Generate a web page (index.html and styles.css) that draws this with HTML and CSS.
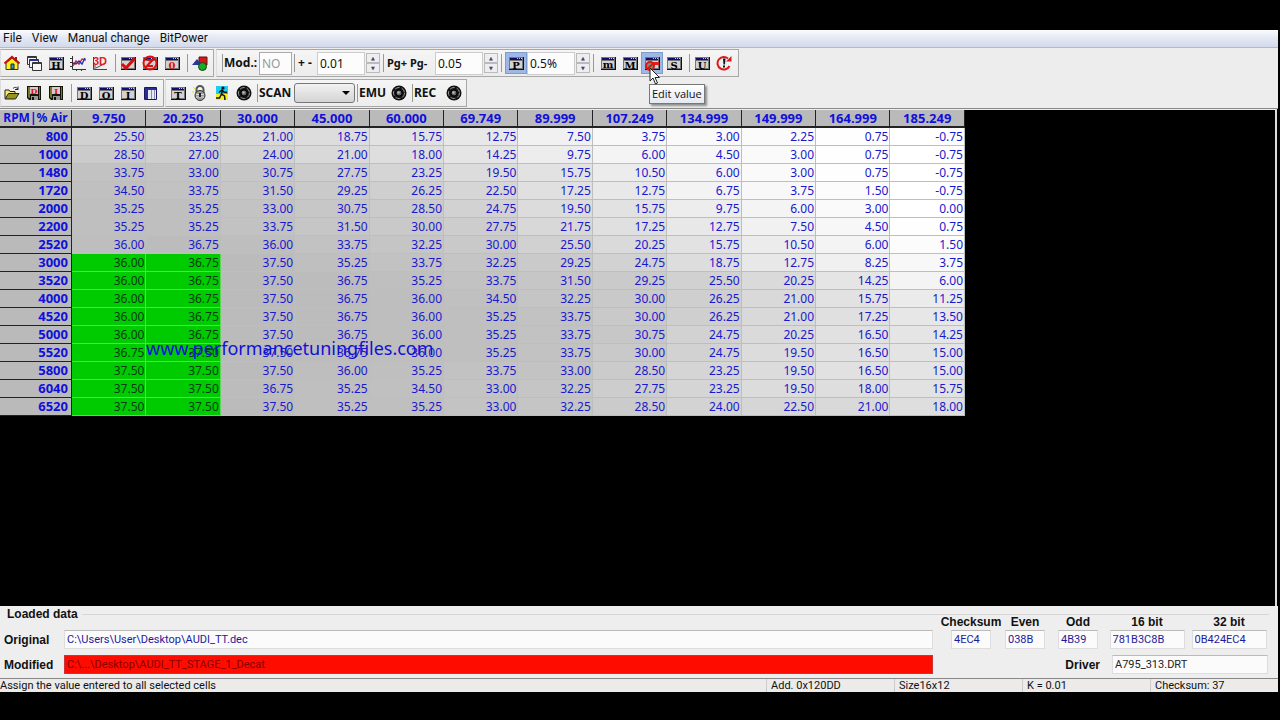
FILE: index.html
```html
<!DOCTYPE html>
<html lang="en">
<head>
<meta charset="utf-8">
<title>BitPower</title>
<link rel="stylesheet" href="styles.css">
</head>
<body>
<svg class="defs" aria-hidden="true">
  <symbol id="win" viewBox="0 0 16 16">
    <rect x="1" y="2" width="15" height="13" fill="#111"/>
    <rect x="1" y="2" width="14" height="12" fill="#777"/>
    <rect x="2" y="6" width="12" height="7" fill="#d2d2d2"/>
    <rect x="2" y="3" width="12" height="2" fill="#10106c"/>
    <path d="M9 3.500h1M11 3.500h1M13 3.500h1" stroke="#ccc"/>
  </symbol>
  <symbol id="floppy" viewBox="0 0 16 16">
    <path d="M1 1h14v14H3l-2-2z" fill="#141408"/>
    <path d="M2 2h2v11H3l-1-1zM13 2h1v12h-1z" fill="#77772c"/>
    <rect x="4" y="2" width="8" height="7" fill="#dcc8c8"/>
    <rect x="5" y="11" width="7" height="4" fill="#999"/>
    <rect x="6" y="12" width="2" height="3" fill="#111"/>
  </symbol>
  <symbol id="knob" viewBox="0 0 16 16">
    <circle cx="8" cy="8" r="7.500" fill="#111"/>
    <circle cx="8" cy="8" r="5.500" fill="none" stroke="#999" stroke-dasharray="5 2"/>
    <circle cx="8" cy="8" r="3" fill="#666" stroke="#000"/>
    <circle cx="7.500" cy="7.500" r="1.200" fill="#bbb"/>
  </symbol>
</svg>

<div class="app">
  <nav class="menubar">
    <button>File</button><button>View</button><button>Manual change</button><button>BitPower</button>
  </nav>

  <div class="toolbars">
    <div class="toolrow">
      <div class="group">
        <button class="tool" aria-label="Home"><svg viewBox="0 0 16 16"><path d="M2 8v6.500h12V8L8 3z" fill="#ffee18" stroke="#333"/><path d="M.500 8.500 8 2l7.500 6.500" fill="none" stroke="#c31414" stroke-width="2.200"/><path d="M11 2h2v4h-2z" fill="#a11"/><path d="M7 9h3v5H7z" fill="#18a8c8" stroke="#222"/></svg></button>
        <button class="tool" aria-label="Cascade"><svg viewBox="0 0 16 16"><g stroke="#333" fill="#f6f6f6"><path d="M1.500 1.500h9v8h-9z"/><path d="M3.500 4.500h9v8h-9z"/><path d="M6.500 7.500h9v8h-9z"/></g><path d="M2 2.500h8M4 5.500h8M7 8.500h8" stroke="#30309c"/></svg></button>
        <button class="tool" aria-label="Hex view"><svg><use href="#win"/><text class="glyph" x="8" y="14">H</text></svg></button>
        <button class="tool" aria-label="2D view"><svg viewBox="0 0 16 16"><path d="M2.500 1v13.500H16M0 3.500h2M0 7.500h2M0 11.500h2M6.500 14v2M11.500 14v2" stroke="#333" fill="none"/><path d="M3 11l3-5 3 3 3-5 4 1" stroke="#d22" fill="none" stroke-width="1.400"/><path d="M3 8l3 1 3-3 3 3 3-6" stroke="#2233bb" fill="none" stroke-width="1.400"/></svg></button>
        <button class="tool" aria-label="3D view"><svg viewBox="0 0 16 16"><path d="M1.500 2v12.500H15M4 13l10-5M3 10v4M7 14v1M11 14v1" stroke="#444" fill="none"/><text class="glyph three" x="8" y="10">3D</text></svg></button>
        <span class="sep"></span>
        <button class="tool" aria-label="Apply"><svg viewBox="0 0 16 16"><use href="#win"/><path d="M2 9l4 4 9-10" stroke="#d80c0c" stroke-width="3" fill="none"/></svg></button>
        <button class="tool" aria-label="Undo change"><svg viewBox="0 0 16 16"><use href="#win"/><circle cx="8" cy="8" r="6.500" stroke="#dc1010" stroke-width="2" fill="none"/><path d="M12 3.500 3.500 12.500M5 5h5L5 11h6" stroke="#dc1010" stroke-width="2" fill="none"/></svg></button>
        <button class="tool" aria-label="Original"><svg><use href="#win"/><text class="glyph red" x="8" y="14">0</text></svg></button>
        <span class="sep"></span>
        <button class="tool" aria-label="Shapes"><svg viewBox="0 0 16 16"><path d="M7 2h8v8H7z" fill="#d81818" stroke="#611"/><path d="M0 10l5-6 5 6z" fill="#283898"/><circle cx="10.500" cy="11.500" r="4" fill="#18ac28" stroke="#141"/></svg></button>
      </div>

      <div class="group values">
        <span class="sep"></span>
        <label class="caption" for="mod">Mod.:</label><input id="mod" class="field mod" value="NO" disabled>
        <span class="sep"></span>
        <label class="caption step" for="step">+ -</label><input id="step" class="field" value="0.01">
        <span class="spin"><button aria-label="Increase step">▲</button><button aria-label="Decrease step">▼</button></span>
        <span class="sep"></span>
        <label class="caption page" for="page">Pg+ Pg-</label><input id="page" class="field" value="0.05">
        <span class="spin"><button aria-label="Increase page step">▲</button><button aria-label="Decrease page step">▼</button></span>
        <span class="sep wide"></span>
        <button class="tool active" aria-label="Percent"><svg><use href="#win"/><text class="glyph" x="8" y="14">P</text></svg></button>
        <input class="field" aria-label="Percent step" value="0.5%">
        <span class="spin"><button aria-label="Increase percent">▲</button><button aria-label="Decrease percent">▼</button></span>
        <span class="sep wide"></span>
        <button class="tool" aria-label="Minimum"><svg><use href="#win"/><text class="glyph" x="8" y="13">m</text></svg></button>
        <button class="tool" aria-label="Maximum"><svg><use href="#win"/><text class="glyph" x="8" y="14">M</text></svg></button>
        <span class="tipwrap">
          <button class="tool active" aria-describedby="tip" aria-label="Edit value"><svg viewBox="0 0 16 16"><use href="#win"/><path d="M4 7h11v3H4z" fill="#e02020"/><circle cx="6" cy="11" r="4" fill="#697" stroke="#e01414" stroke-width="2"/><path d="M3 14l7-6" stroke="#e01414" stroke-width="2"/></svg></button>
          <svg class="cursor" viewBox="0 0 12 18"><path d="M1 1v13l3-3 2.500 6 2-1L6 10.500h4.500z" fill="#fff" stroke="#222"/></svg>
          <span class="tip" id="tip" role="tooltip">Edit value</span>
        </span>
        <button class="tool" aria-label="Set"><svg><use href="#win"/><text class="glyph" x="8" y="14">S</text></svg></button>
        <span class="sep"></span>
        <button class="tool" aria-label="Undo"><svg><use href="#win"/><text class="glyph" x="8" y="14">U</text></svg></button>
        <button class="tool" aria-label="Restore all"><svg viewBox="0 0 16 16"><path d="M13.500 11A6.300 6.300 0 1 1 12 3.500" stroke="#e01818" stroke-width="2" fill="none"/><path d="M10 6.500h5.500V1z" fill="#e01818"/><path d="M7 3.500h2.500L9 9.500H7.500zM7 10.500h2v2H7z" fill="#111"/></svg></button>
      </div>
    </div>

    <div class="toolrow">
      <div class="group">
        <button class="tool" aria-label="Open"><svg viewBox="0 0 16 16"><path d="M1 13.500V5h4l1 1.500h5V9" fill="#f4ea70" stroke="#222"/><path d="M1 14l3.500-5.500H15L11.500 14z" fill="#98941c" stroke="#222"/><path d="M9 3.500c2-2 4-1 5 1m0-3v3h-3" fill="none" stroke="#222"/></svg></button>
        <button class="tool" aria-label="Save data"><svg><use href="#floppy"/><text class="glyph red small" x="8" y="9">D</text></svg></button>
        <button class="tool" aria-label="Save info"><svg><use href="#floppy"/><text class="glyph red small" x="8" y="9">I</text></svg></button>
        <span class="sep"></span>
        <button class="tool" aria-label="Data"><svg><use href="#win"/><text class="glyph" x="8" y="14">D</text></svg></button>
        <button class="tool" aria-label="Original data"><svg><use href="#win"/><text class="glyph" x="8" y="14">O</text></svg></button>
        <button class="tool" aria-label="Info"><svg><use href="#win"/><text class="glyph" x="8" y="14">I</text></svg></button>
        <button class="tool" aria-label="Tile"><svg viewBox="0 0 16 16"><path d="M2.500 2.500h12v12h-12z" fill="#e8e8f0" stroke="#181860"/><path d="M3 3h11v2H3zM3 5h3v9H3z" fill="#2c2c98"/><path d="M9.500 5v9M12.500 5v9" stroke="#88b"/></svg></button>
      </div>

      <div class="group second">
        <button class="tool" aria-label="Table"><svg><use href="#win"/><text class="glyph" x="8" y="14">T</text></svg></button>
        <button class="tool" aria-label="Lock"><svg viewBox="0 0 16 16"><path d="M4.500 8V4.500a3.500 3.500 0 0 1 7 0V8" fill="none" stroke="#555" stroke-width="2"/><circle cx="8" cy="10.500" r="5" fill="#999" stroke="#333"/><path d="M4 9.500h8M4 12h8" stroke="#ddd"/><path d="M7 8h2v4H7z" fill="#222"/><path d="M1 2l2 2M0 7h2" stroke="#dd3"/></svg></button>
        <button class="tool" aria-label="Run"><svg viewBox="0 0 16 16"><path d="M2 1h12v9H2z" fill="#20ccf0"/><path d="M2 9h12v6H2z" fill="#f4f020"/><circle cx="9" cy="3" r="1.600" fill="#111"/><path d="M8.500 5 7.500 9l3 2 .5 4M7.500 9l-2 4H2M5 7.500l3-2.500 2 2 3 .5" fill="none" stroke="#111" stroke-width="1.500"/></svg></button>
        <button class="tool" aria-label="Connect"><svg><use href="#knob"/></svg></button>
        <span class="line"></span>
        <label class="caption scan" for="scan">SCAN</label>
        <span class="drop"><select id="scan"><option></option></select></span>
        <span class="line"></span>
        <span class="caption tall">EMU</span>
        <button class="tool" aria-label="Emulate"><svg><use href="#knob"/></svg></button>
        <span class="line"></span>
        <span class="caption tall">REC</span>
        <button class="tool" aria-label="Record"><svg><use href="#knob"/></svg></button>
      </div>
    </div>
  </div>

  <main class="sheet">
    <div class="map">
      <table>
        <thead><tr id="head"></tr></thead>
        <tbody id="rows"></tbody>
      </table>
      <span class="mark">www.performancetuningfiles.com</span>
    </div>
  </main>

  <section class="loaded">
    <h2>Loaded data</h2>
    <div class="panes">
      <div class="files">
        <label for="orig">Original</label><input id="orig" value="C:\Users\User\Desktop\AUDI_TT.dec">
        <label for="modif">Modified</label><input id="modif" class="changed" value="C:\...\Desktop\AUDI_TT_STAGE_1_Decat">
      </div>
      <div class="sums">
        <label for="c1">Checksum</label><label for="c2">Even</label><label for="c3">Odd</label><label for="c4">16 bit</label><label for="c5">32 bit</label>
        <input id="c1" value="4EC4"><input id="c2" value="038B"><input id="c3" value="4B39"><input id="c4" class="long" value="781B3C8B"><input id="c5" class="long" value="0B424EC4">
        <label class="drv" for="driver">Driver</label><input id="driver" value="A795_313.DRT">
      </div>
    </div>
  </section>

  <footer class="status">
    <span>Assign the value entered to all selected cells</span><span>Add. 0x120DD</span><span>Size16x12</span><span>K = 0.01</span><span>Checksum: 37</span>
  </footer>
</div>
<script src="map.js"></script>
</body>
</html>
```

FILE: styles.css
```css
* { box-sizing: border-box; }
body {
  margin: 0;
  background: #000;
  color: #111;
  font: 12px/16px Roboto, "Noto Sans", sans-serif;
}
button, input, select { font: inherit; color: inherit; margin: 0; padding: 0; border: 0; background: none; }
.defs { position: absolute; width: 0; height: 0; }

.app {
  display: flex;
  flex-direction: column;
  min-height: 100vh;
  padding: 30px 2px 28px 0;
}

.menubar {
  display: flex;
  gap: 10px;
  padding: 0 3px 1px;
  background: linear-gradient(#fafbfd, #e4e9f4 45%, #d3daeb);
}

.toolbars {
  display: flex;
  flex-direction: column;
  gap: 2px;
  padding: 1px 0;
  background: #ededed;
  border-top: 1px solid #bbb;
  border-bottom: 1px solid #888;
}
.toolrow { display: flex; gap: 2px; height: 28px; }
.group {
  display: flex;
  align-items: center;
  padding-right: 2px;
  border: 1px solid #a8a8a8;
  border-left-color: #ddd;
  background: linear-gradient(#f5f5f5, #ececec);
}
.group.values { padding: 0 3px 0 1px; }
.group.second { padding: 0 1px; margin-left: -1px; }
.tool {
  flex: none;
  display: flex;
  align-items: center;
  justify-content: center;
  width: 22px;
  height: 22px;
}
.tool svg { width: 16px; height: 16px; }
.tool.active { background: #9db8e4; outline: 1px solid #7f9ccc; outline-offset: -1px; }
.sep { flex: none; width: 5px; height: 18px; border-right: 1px solid #999; margin-right: 1px; }
.sep.wide { margin-right: 3px; }
.line { flex: none; width: 1px; height: 18px; background: #999; margin: 0 1px 0 2px; }
.glyph { font: bold 10px "DejaVu Serif", serif; text-anchor: middle; fill: #000; }
.glyph.red { fill: #dd1111; }
.glyph.small { font-size: 8px; }
.glyph.three { font: bold 11px "Liberation Sans", sans-serif; fill: #dd2020; }

.caption { font: bold 12px/16px "Noto Sans", sans-serif; width: 35px; white-space: nowrap; }
.caption.step { width: 21px; padding-left: 2px; }
.caption.page { width: 50px; padding-left: 2px; font-size: 11px; }
.caption.scan { width: 35px; }
.caption.tall { width: 29px; }
.field {
  width: 48px;
  height: 23px;
  padding: 0 2px;
  background: #fcfcfc;
  border: 1px solid #ccc;
  font-family: "Noto Sans", sans-serif;
}
.field.mod { width: 33px; color: #999; border-color: #aaa; margin-right: -2px; }
.spin { display: flex; flex-direction: column; width: 14px; margin-left: 1px; margin-right: -1px; }
.spin button {
  height: 10px;
  font: 5px/8px "DejaVu Sans", sans-serif;
  color: #446;
  background: #eee;
  border: 1px solid #bbb;
}

.drop { position: relative; width: 61px; height: 20px; }
.drop select {
  appearance: none;
  width: 100%;
  height: 100%;
  border: 1px solid #777;
  border-radius: 3px;
  background: linear-gradient(#f2f2f2, #d4d4d4);
}
.drop::after {
  content: "";
  position: absolute;
  right: 5px;
  top: 8px;
  border: 4px solid transparent;
  border-top-color: #000;
  border-bottom: 0;
}

.tipwrap { position: relative; z-index: 2; }
.cursor { position: absolute; left: 8px; top: 15px; width: 12px; height: 18px; z-index: 1; }
.tip {
  position: absolute;
  left: 8px;
  top: 32px;
  padding: 0 2px;
  border: 1px solid #777;
  background: linear-gradient(#fff, #e6e8f2);
  box-shadow: 2px 2px 2px #0006;
  white-space: nowrap;
  font: 11px/18px "Open Sans", sans-serif;
}

.sheet {
  flex: 1;
  margin-right: 1px;
  border-right: 2px solid #ddd;
  border-top: 1px solid #eee;
}
.map { position: relative; width: 965px; }
.map table {
  width: 100%;
  table-layout: fixed;
  border-spacing: 0;
  font: 12px/16px "Noto Sans", sans-serif;
  color: #1818cc;
}
.map th {
  padding: 0 3px 1px;
  background: #bababa;
  border-right: 1px solid #222;
  border-bottom: 1px solid #222;
  font-size: 13px;
  color: #1010dd;
}
.map thead th { border-bottom-width: 2px; padding-bottom: 0; }
.map thead th:first-child { width: 72px; padding: 0 1px; font-size: 12px; }
.map tbody th { text-align: right; }
.map td {
  padding: 1px 1px 0;
  text-align: right;
  border-right: 1px solid #bebebe;
  border-bottom: 1px solid #bebebe;
}
.map .sel { background: #00cb00; color: #053c10; border-color: #5fd45f; }
.mark {
  position: absolute;
  left: 146px;
  top: 226px;
  font: 18px/24px "Noto Sans", sans-serif;
  color: #1010d8;
}

.loaded {
  padding: 0 9px 4px 4px;
  background: #eee;
  font: bold 12px/16px "Liberation Sans", sans-serif;
}
.loaded h2 { display: flex; align-items: center; gap: 4px; margin: 0; padding-left: 3px; font: inherit; }
.loaded h2::after { content: ""; flex: 1; border-top: 1px solid #d6d6d6; }
.loaded input {
  width: 100%;
  height: 19px;
  padding: 0 2px;
  background: #fbfbfb;
  border: 1px solid #ddd;
  border-top-color: #bbb;
  font: 11px/16px Roboto, sans-serif;
  color: #1c1c9c;
}
.panes { display: flex; gap: 10px; margin-top: -8px; }
.files {
  flex: 1;
  display: grid;
  grid-template-columns: 60px 1fr;
  row-gap: 6px;
  align-content: end;
  align-items: center;
}
.files .changed { background: #ff0c00; color: #8a0000; border-color: #c33; }
.sums {
  display: grid;
  grid-template-columns: 56px 52px 54px 84px 80px;
  align-items: center;
  justify-items: center;
}
.sums input { width: 40px; }
.sums .long { width: 75px; }
.sums .drv { grid-column: 1 / 4; justify-self: end; margin: 6px 5px 0 0; }
.sums #driver { grid-column: 4 / 6; width: 156px; justify-self: end; margin-top: 6px; margin-right: 1px; color: #222; }

.status {
  display: grid;
  grid-template-columns: 1fr repeat(4, 128px);
  background: #ecebea;
  border-top: 1px solid #888;
  font-size: 11px;
  line-height: 13px;
}
.status span + span { padding-left: 4px; border-left: 1px solid #ccc; }
```

FILE: map.js
```js
const air = ["9.750", "20.250", "30.000", "45.000", "60.000", "69.749", "89.999", "107.249", "134.999", "149.999", "164.999", "185.249"];
const data = `800 25.50 23.25 21.00 18.75 15.75 12.75 7.50 3.75 3.00 2.25 0.75 -0.75
1000 28.50 27.00 24.00 21.00 18.00 14.25 9.75 6.00 4.50 3.00 0.75 -0.75
1480 33.75 33.00 30.75 27.75 23.25 19.50 15.75 10.50 6.00 3.00 0.75 -0.75
1720 34.50 33.75 31.50 29.25 26.25 22.50 17.25 12.75 6.75 3.75 1.50 -0.75
2000 35.25 35.25 33.00 30.75 28.50 24.75 19.50 15.75 9.75 6.00 3.00 0.00
2200 35.25 35.25 33.75 31.50 30.00 27.75 21.75 17.25 12.75 7.50 4.50 0.75
2520 36.00 36.75 36.00 33.75 32.25 30.00 25.50 20.25 15.75 10.50 6.00 1.50
3000 36.00 36.75 37.50 35.25 33.75 32.25 29.25 24.75 18.75 12.75 8.25 3.75
3520 36.00 36.75 37.50 36.75 35.25 33.75 31.50 29.25 25.50 20.25 14.25 6.00
4000 36.00 36.75 37.50 36.75 36.00 34.50 32.25 30.00 26.25 21.00 15.75 11.25
4520 36.00 36.75 37.50 36.75 36.00 35.25 33.75 30.00 26.25 21.00 17.25 13.50
5000 36.00 36.75 37.50 36.75 36.00 35.25 33.75 30.75 24.75 20.25 16.50 14.25
5520 36.75 37.50 37.50 36.75 36.00 35.25 33.75 30.00 24.75 19.50 16.50 15.00
5800 37.50 37.50 37.50 36.00 35.25 33.75 33.00 28.50 23.25 19.50 16.50 15.00
6040 37.50 37.50 36.75 35.25 34.50 33.00 32.25 27.75 23.25 19.50 18.00 15.75
6520 37.50 37.50 37.50 35.25 35.25 33.00 32.25 28.50 24.00 22.50 21.00 18.00`;

document.getElementById("head").innerHTML =
  "<th>RPM|% Air</th>" + air.map(a => `<th scope="col">${a}</th>`).join("");

// Higher values get a darker grey; the selected block is green.
document.getElementById("rows").innerHTML = data.split("\n").map((line, r) => {
  const [rpm, ...cells] = line.split(" ");
  return `<tr><th scope="row">${rpm}</th>` + cells.map((v, c) => {
    if (r >= 7 && c < 2) return `<td class="sel">${v}</td>`;
    const g = Math.round(255 - 68 * Math.max(0, v) / 37.5);
    return `<td style="background:rgb(${g},${g},${g})">${v}</td>`;
  }).join("") + "</tr>";
}).join("");
```
